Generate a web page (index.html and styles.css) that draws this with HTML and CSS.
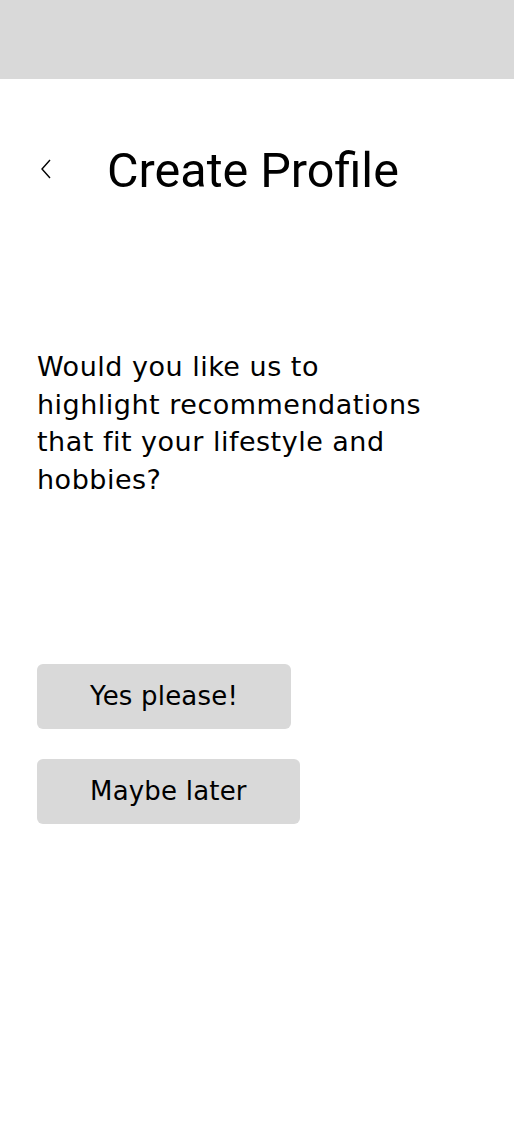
FILE: index.html
```html
<!DOCTYPE html>
<html lang="en">
<head>
    <meta charset="UTF-8">
    <meta name="viewport" content="width=device-width, initial-scale=1.0">
    <title>Create Profile</title>
    <link rel="stylesheet" href="styles.css">
</head>
<body>
<div class="status-bar"></div>
<div class="screen">
    <div class="header">
        <button class="back-btn" aria-label="Back">
            <svg width="14" height="22" viewBox="0 0 14 22">
                <path d="M11 2 L3 11 L11 20" fill="none" stroke="#000" stroke-width="1.4"/>
            </svg>
        </button>
        <h1>Create Profile</h1>
    </div>
    <p class="question">Would you like us to<br>highlight recommendations<br>that fit your lifestyle and<br>hobbies?</p>
    <div class="actions">
        <button class="btn">Yes please!</button>
        <button class="btn">Maybe later</button>
    </div>
</div>
</body>
</html>
```

FILE: styles.css
```css
body {
    margin: 0;
    padding: 0;
    background-color: #fff;
    color: #000;
    font-family: 'DejaVu Sans', sans-serif;
}

.status-bar {
    height: 79px;
    background-color: #d9d9d9;
}

.screen {
    padding: 0 37px;
}

.header {
    display: flex;
    align-items: center;
    margin-top: 62px;
    height: 58px;
}

.back-btn {
    background: transparent;
    border: none;
    padding: 0;
    margin-left: 2px;
    width: 68px;
    text-align: left;
    cursor: pointer;
}

h1 {
    margin: 0;
    font-family: Roboto, sans-serif;
    font-weight: 400;
    font-size: 48.5px;
}

.question {
    margin: 149px 0 0;
    font-size: 27px;
    letter-spacing: 0.5px;
    line-height: 37.7px;
}

.actions {
    margin-top: 165px;
    display: flex;
    flex-direction: column;
    align-items: flex-start;
    gap: 30px;
}

.btn {
    height: 65px;
    padding: 0 53px;
    font-family: 'DejaVu Sans', sans-serif;
    font-size: 26px;
    letter-spacing: 0.2px;
    color: #000;
    background-color: #d9d9d9;
    border: none;
    border-radius: 6px;
    cursor: pointer;
}
```
